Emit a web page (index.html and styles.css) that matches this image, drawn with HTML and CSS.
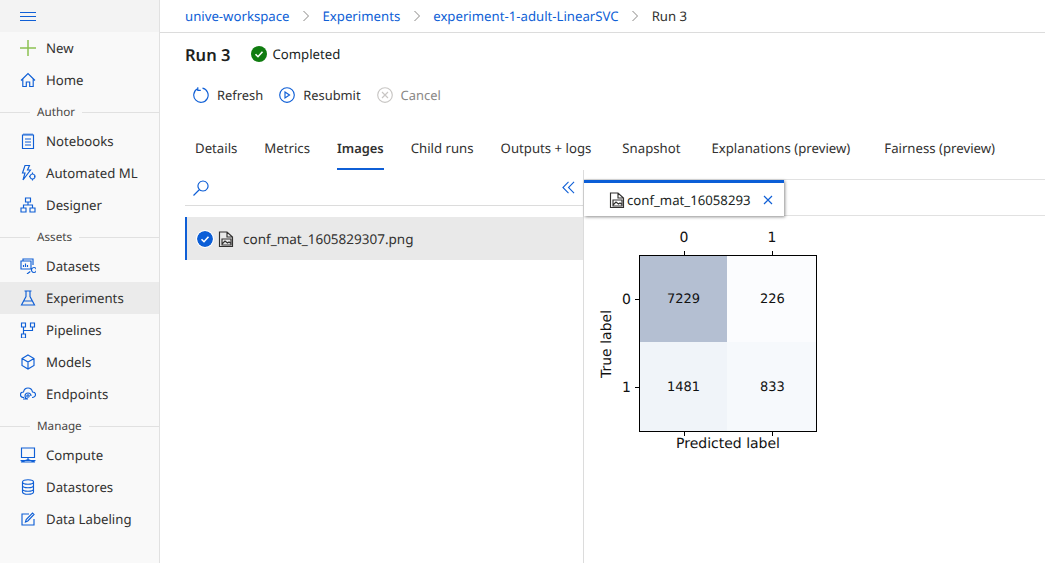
FILE: index.html
```html
<!DOCTYPE html>
<html lang="en">
<head>
	<meta charset="UTF-8">
	<title>Run 3</title>
	<link rel="stylesheet" href="styles.css">
</head>
<body>
	<div class="app">
		<nav class="side">
			<div class="side-top">
				<svg class="ico burger" viewBox="0 0 16 16"><path d="M0 4.500h16M0 8.500h16M0 12.500h16"/></svg>
			</div>
			<a class="link"><svg class="ico plus" viewBox="0 0 16 16"><path d="M8 0v16M0 8h16"/></svg>New</a>
			<a class="link"><svg class="ico" viewBox="0 0 16 16"><path d="M1 8.500 8 1.500l7 7M2.800 7v7.500h3.500V10h3.400v4.500h3.500V7"/></svg>Home</a>
			<div class="group"><span>Author</span></div>
			<a class="link"><svg class="ico" viewBox="0 0 16 16"><path d="M2.500 2h11v13.500h-11zM4 .5v2M6 .5v2M8 .5v2M10 .5v2M12 .5v2M5 6h6M5 9h6M5 12h6"/></svg>Notebooks</a>
			<a class="link"><svg class="ico" viewBox="0 0 16 16"><path d="M5 .5h4.500L7.500 5h3L3 15l2-7H2.500zM12.500 9a2.500 2.500 0 1 0 .01 0M12.500 7.500V9M12.500 14v1.500M9 11.500h1.500M14 11.500h1.500"/></svg>Automated ML</a>
			<a class="link"><svg class="ico" viewBox="0 0 16 16"><path d="M5.500 1h5v4h-5zM1 11h5v4H1zM10 11h5v4h-5zM8 5v3M3.500 11V8h9v3"/></svg>Designer</a>
			<div class="group"><span>Assets</span></div>
			<a class="link"><svg class="ico" viewBox="0 0 16 16"><path d="M3 3V1h10v6M1 3h10v8H1zM3.500 9V7M5.500 9V5.500M7.500 9V7M14 9.500a2.500 2.500 0 1 0 .01 0M10.300 13.500 7 16"/></svg>Datasets</a>
			<a class="link active"><svg class="ico" viewBox="0 0 16 16"><path d="M4.500 1h7M6 1v5.500L1.500 15h13L10 6.500V1M3.800 11h8.400"/></svg>Experiments</a>
			<a class="link"><svg class="ico" viewBox="0 0 16 16"><path d="M1.500 1h4v4h-4zM10.500 1h4v4h-4zM1.500 12h4v4h-4zM3.500 5v7M3.500 8.500h9V5"/></svg>Pipelines</a>
			<a class="link"><svg class="ico" viewBox="0 0 16 16"><path d="M8 1l6 3.500v7L8 15l-6-3.500v-7zM2 4.500l6 3.500 6-3.500M8 8v7"/></svg>Models</a>
			<a class="link"><svg class="ico" viewBox="0 0 16 16"><path d="M4 11.500C1.500 11.500.5 10 .5 8.500S1.500 6 3.500 6c.5-2.500 2-4 4.500-4s4 1.500 4.500 4c2 0 3 1 3 2.500s-1.500 3-3.500 3M11 10a3 3 0 1 0-3 3H3"/><circle class="dot" cx="8" cy="10" r="1.200"/></svg>Endpoints</a>
			<div class="group"><span>Manage</span></div>
			<a class="link"><svg class="ico" viewBox="0 0 16 16"><path d="M1.500 1h13v9.500h-13zM8 10.500V13M1 15l7-2.500 7 2.500zM.5 13.500h15"/></svg>Compute</a>
			<a class="link"><svg class="ico" viewBox="0 0 16 16"><path d="M2.500 3c0-3 11-3 11 0v10c0 3-11 3-11 0zM2.500 3c0 3 11 3 11 0M2.500 6.500c0 3 11 3 11 0M2.500 10c0 3 11 3 11 0"/></svg>Datastores</a>
			<a class="link"><svg class="ico" viewBox="0 0 16 16"><path d="M14 8v6H2V3h7M5.500 11l.7-2.500L12.500 2 14 3.500 7.800 10z"/></svg>Data Labeling</a>
		</nav>

		<main class="main">
			<div class="crumbs">
				<a>unive-workspace</a><svg class="chev" viewBox="0 0 8 12"><path d="M1.500 1l5 5-5 5"/></svg>
				<a>Experiments</a><svg class="chev" viewBox="0 0 8 12"><path d="M1.500 1l5 5-5 5"/></svg>
				<a>experiment-1-adult-LinearSVC</a><svg class="chev" viewBox="0 0 8 12"><path d="M1.500 1l5 5-5 5"/></svg>
				<span>Run 3</span>
			</div>

			<div class="head">
				<h1>Run 3</h1>
				<svg class="status" viewBox="0 0 16 16"><circle cx="8" cy="8" r="8"/><path d="M4.500 8.200 7 10.700l4.500-5"/></svg>
				<span>Completed</span>
			</div>

			<div class="cmds">
				<a class="cmd"><svg class="ico" viewBox="0 0 16 16"><path d="M4.500 1.800a7.200 7.200 0 1 0 5-.7M4.800 .3v3h3"/></svg>Refresh</a>
				<a class="cmd"><svg class="ico" viewBox="0 0 16 16"><circle cx="8" cy="8" r="7.300"/><path d="M6 5l4.500 3L6 11z"/></svg>Resubmit</a>
				<a class="cmd off"><svg class="ico" viewBox="0 0 16 16"><circle cx="8" cy="8" r="7.300"/><path d="M5 5l6 6M11 5l-6 6"/></svg>Cancel</a>
			</div>

			<div class="tabs">
				<a>Details</a>
				<a>Metrics</a>
				<a class="cur">Images</a>
				<a>Child runs</a>
				<a>Outputs + logs</a>
				<a class="wide">Snapshot</a>
				<a class="wide">Explanations (preview)</a>
				<a class="widest">Fairness (preview)</a>
			</div>

			<div class="split">
				<section class="files">
					<div class="search">
						<svg class="ico" viewBox="0 0 16 16"><path d="M10 1a5 5 0 1 0 .01 0M6.500 9.500 .5 15.500"/></svg>
						<svg class="ico back" viewBox="0 0 14 14"><path d="M7 1 1 7l6 6M13 1 7 7l6 6"/></svg>
					</div>
					<div class="file">
						<svg class="tick" viewBox="0 0 16 16"><circle cx="8" cy="8" r="8"/><path d="M4.500 8.200 7 10.700l4.500-5"/></svg>
						<svg class="ico doc" viewBox="0 0 16 16"><path d="M9 1H1.500v14.500h13V6zM9 1v5h5.500M4 8h9v6H4zM4 13l3-3 2.500 2 1.500-1 2 1.500"/></svg>
						<span>conf_mat_1605829307.png</span>
					</div>
				</section>

				<section class="viewer">
					<div class="viewer-bar">
						<div class="doc-tab">
							<svg class="ico doc" viewBox="0 0 16 16"><path d="M9 1H1.500v14.500h13V6zM9 1v5h5.500M4 8h9v6H4zM4 13l3-3 2.500 2 1.500-1 2 1.500"/></svg>
							<span class="doc-name">conf_mat_16058293</span>
							<svg class="ico close" viewBox="0 0 10 10"><path d="M1 1l8 8M9 1l-8 8"/></svg>
						</div>
					</div>
					<svg class="plot" viewBox="0 0 240 240">
						<rect x="49" y="35" width="88" height="87" fill="#b4bfd2"/>
						<rect x="137" y="35" width="90" height="87" fill="#fbfcfe"/>
						<rect x="49" y="122" width="88" height="89" fill="#f0f4f9"/>
						<rect x="137" y="122" width="90" height="89" fill="#f6f9fc"/>
						<rect class="frame" x="49.500" y="35.500" width="177" height="176"/>
						<path class="marks" d="M94.500 31v4M182.500 31v4M94.500 212v4M182.500 212v4M45 79.500h4M45 167.500h4"/>
						<text class="lab" x="94" y="22" text-anchor="middle">0</text>
						<text class="lab" x="182" y="22" text-anchor="middle">1</text>
						<text class="lab" x="41" y="84" text-anchor="end">0</text>
						<text class="lab" x="41" y="172" text-anchor="end">1</text>
						<text x="93.500" y="83" text-anchor="middle">7229</text>
						<text x="182.500" y="83" text-anchor="middle">226</text>
						<text x="93.500" y="171" text-anchor="middle">1481</text>
						<text x="182.500" y="171" text-anchor="middle">833</text>
						<text class="lab" x="138" y="228" text-anchor="middle">Predicted label</text>
						<text class="lab" x="21" y="124" text-anchor="middle" transform="rotate(-90 21 124)">True label</text>
					</svg>
				</section>
			</div>
		</main>
	</div>
</body>
</html>
```

FILE: styles.css
```css
* {
	margin: 0;
	padding: 0;
	box-sizing: border-box;
}
body {
	font-family: "Noto Sans", "Liberation Sans", sans-serif;
	font-size: 13.2px;
	color: #323130;
	background: #fff;
	overflow: hidden;
	text-rendering: geometricPrecision;
}
.app {
	display: flex;
	height: 563px;
}
.ico {
	width: 16px;
	height: 16px;
	flex: none;
	fill: none;
	stroke: #0f5fd6;
	stroke-width: 1.15;
}

/* sidebar */
.side {
	width: 160px;
	flex: none;
	background: #f9f9f9;
	border-right: 1px solid #e1e1e1;
}
.side-top {
	height: 32px;
	padding-left: 20px;
	display: flex;
	align-items: center;
	background: #f3f3f3;
}
.ico.burger {
	stroke-width: 1;
	shape-rendering: crispEdges;
}
.link {
	height: 32px;
	padding-left: 20px;
	display: flex;
	align-items: center;
	gap: 10px;
}
.link.active {
	background: #ebebeb;
}
.ico.plus {
	stroke: #8cc152;
	stroke-width: 1.5;
}
.group {
	height: 29px;
	padding-top: 3px;
	display: flex;
	align-items: center;
	font-size: 11.7px;
	color: #484644;
}
.group::before,
.group::after {
	content: "";
	height: 1px;
	background: #e1e1e1;
}
.group::before {
	width: 30px;
	margin-right: 7px;
}
.group::after {
	flex: 1;
	margin-left: 7px;
}

/* main column */
.main {
	flex: 1;
	min-width: 0;
	display: flex;
	flex-direction: column;
}
.crumbs {
	height: 33px;
	padding-left: 25px;
	display: flex;
	align-items: center;
	border-bottom: 1px solid #dcdcdc;
}
.crumbs a {
	color: #0f5fd6;
}
.chev {
	width: 8px;
	height: 12px;
	margin: 0 12.5px;
	fill: none;
	stroke: #8a8886;
}
.head {
	height: 42px;
	padding: 0 0 0 25px;
	display: flex;
	align-items: center;
	color: #201f1e;
}
.head h1 {
	font-size: 16.5px;
	font-weight: 600;
	margin-right: 21px;
}
.status {
	width: 16px;
	height: 16px;
	margin-right: 5px;
}
.status circle {
	fill: #107c10;
}
.status path,
.tick path {
	fill: none;
	stroke: #fff;
	stroke-width: 1.6;
}
.cmds {
	height: 39px;
	padding-left: 33px;
	display: flex;
	align-items: center;
	gap: 16px;
	font-size: 12.9px;
}
.cmd {
	display: flex;
	align-items: center;
	gap: 8px;
}
.cmd.off {
	color: #8a8886;
}
.cmd.off .ico {
	stroke: #c8c6c4;
}
.tabs {
	height: 56px;
	padding: 21px 0 0 35px;
	display: flex;
	gap: 27px;
}
.tabs a {
	height: 35px;
	line-height: 26px;
}
.tabs a.cur {
	font-size: 12.9px;
	font-weight: 600;
	border-bottom: 2px solid #0f5fd6;
}
.tabs a.wide {
	margin-left: 4px;
}
.tabs a.widest {
	margin-left: 7px;
}

/* file list + preview */
.split {
	flex: 1;
	display: flex;
	min-height: 0;
}
.files {
	width: 424px;
	flex: none;
	padding: 10px 0 0 25px;
	border-right: 1px solid #dcdcdc;
}
.search {
	height: 26px;
	padding: 0 8px 10px;
	display: flex;
	align-items: center;
	justify-content: space-between;
	border-bottom: 1px solid #dcdcdc;
}
.back {
	width: 13px;
	height: 13px;
}
.file {
	height: 43px;
	margin-top: 11px;
	padding-left: 10px;
	display: flex;
	align-items: center;
	gap: 5px;
	font-size: 13.5px;
	background: #e9e9e9;
	border-left: 2px solid #0f5fd6;
}
.file span {
	margin-left: 4px;
}
.tick {
	width: 16px;
	height: 16px;
	flex: none;
	border-radius: 50%;
	box-shadow: 0 0 0 1px #fff;
}
.tick circle {
	fill: #0b5ed7;
}
.ico.doc {
	stroke: #323130;
}
.viewer {
	flex: 1;
	min-width: 0;
	padding-top: 9px;
}
.viewer-bar {
	height: 37px;
	border-top: 1px solid #e1e1e1;
	border-bottom: 1px solid #e1e1e1;
}
.doc-tab {
	width: 200px;
	height: 36px;
	padding: 0 10px 0 25px;
	display: flex;
	align-items: center;
	background: #fff;
	border-top: 3px solid #0b5ed7;
	box-shadow: 1px 1px 3px rgba(0, 0, 0, 0.45);
	color: #201f1e;
}
.doc-name {
	width: 123px;
	margin-left: 2px;
	white-space: nowrap;
}
.close {
	width: 10px;
	height: 10px;
	margin-left: 13px;
}
.plot {
	display: block;
	width: 240px;
	height: 240px;
	margin: 4px 0 0 6px;
	font-family: "DejaVu Sans", sans-serif;
	font-size: 13px;
	fill: #111;
}
.plot .lab {
	font-size: 14px;
}
.frame {
	fill: none;
	stroke: #000;
}
.marks {
	stroke: #000;
	fill: none;
}
```
